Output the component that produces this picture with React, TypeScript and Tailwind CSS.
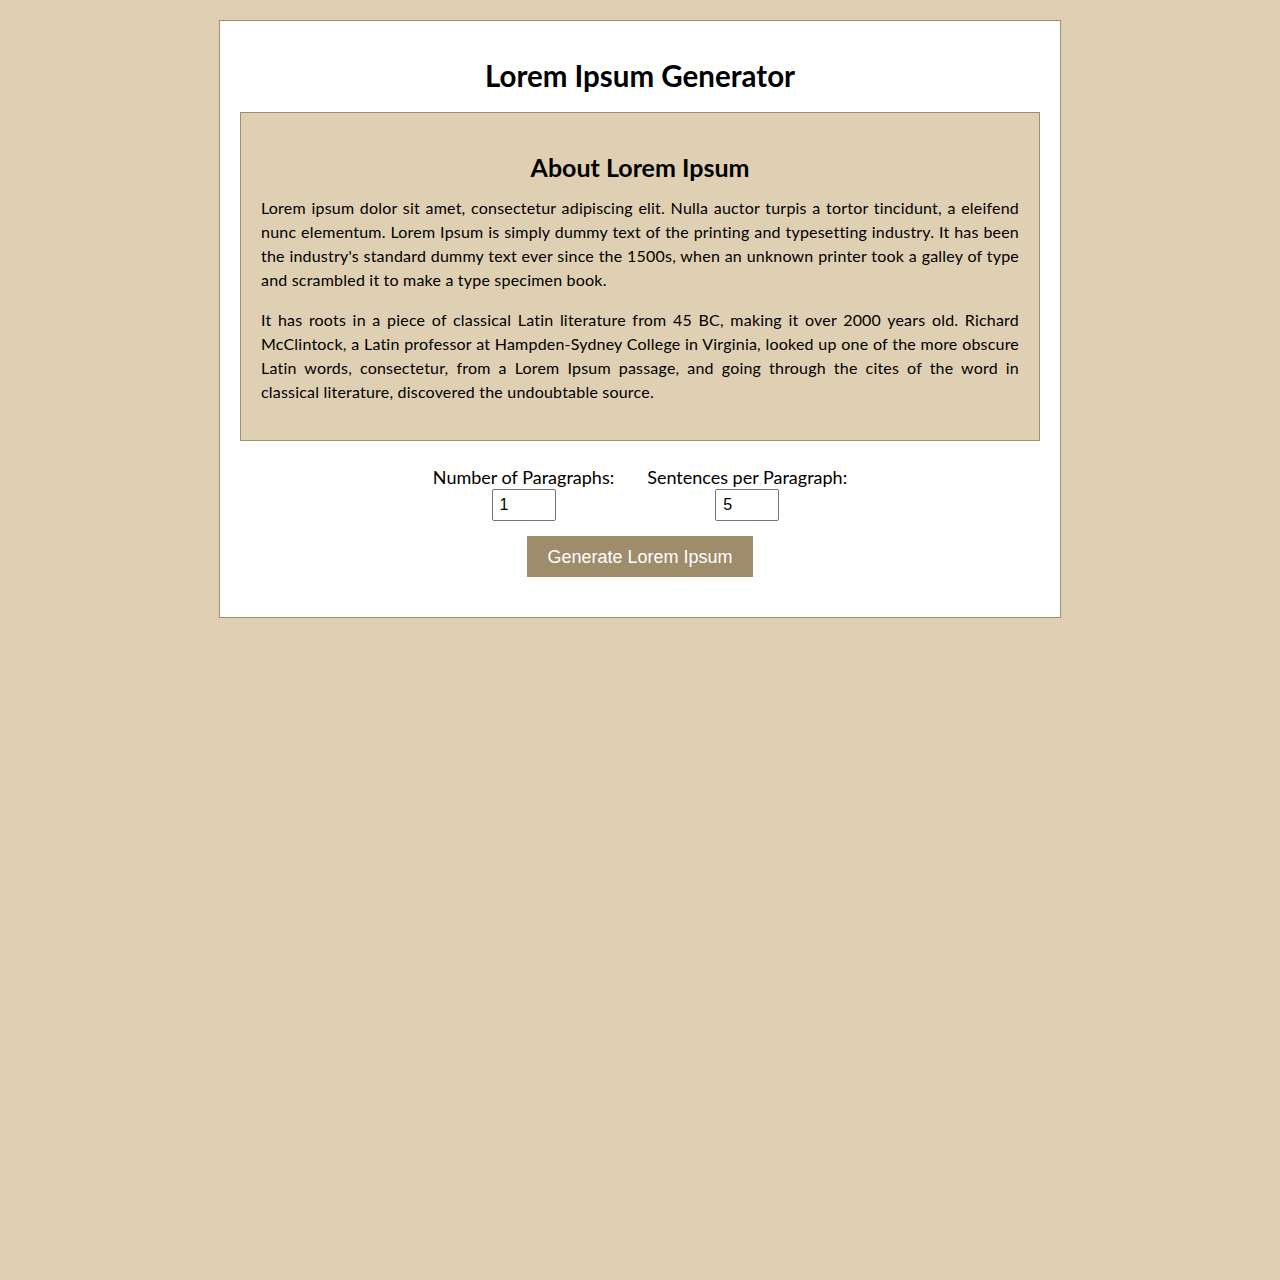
import { useState } from "react";

const para1 = [
  "Lorem ipsum dolor sit amet, consectetur adipiscing elit. Nulla auctor turpis a tortor tincidunt, a eleifend",
  "nunc elementum. Lorem Ipsum is simply dummy text of the printing and typesetting industry. It has been",
  "the industry's standard dummy text ever since the 1500s, when an unknown printer took a galley of type",
  "and scrambled it to make a type specimen book.",
];

const para2 = [
  "It has roots in a piece of classical Latin literature from 45 BC, making it over 2000 years old. Richard",
  "McClintock, a Latin professor at Hampden-Sydney College in Virginia, looked up one of the more obscure",
  "Latin words, consectetur, from a Lorem Ipsum passage, and going through the cites of the word in",
  "classical literature, discovered the undoubtable source.",
];

function Paragraph({ lines, className }: { lines: string[]; className?: string }) {
  return (
    <p className={className}>
      {lines.map((line, i) => (
        <span
          key={i}
          className={
            i < lines.length - 1
              ? "block text-justify [text-align-last:justify]"
              : "block text-left"
          }
        >
          {line}
        </span>
      ))}
    </p>
  );
}

export default function App() {
  const [paragraphs, setParagraphs] = useState("1");
  const [sentences, setSentences] = useState("5");

  return (
    <div className="min-h-[1280px] bg-[#dfd0b3] pt-5 font-['Lato','Liberation_Sans',sans-serif] text-black">
      <div className="mx-auto w-[842px] border border-[#a08f6e] bg-white p-5">
        <h1 className="mt-[19px] mb-5 text-center text-[29.5px] leading-8 font-bold">
          Lorem Ipsum Generator
        </h1>

        {/* about box */}
        <div className="border border-[#a08f6e] bg-[#dfd0b3] p-5">
          <h2 className="mt-5 mb-[15px] text-center text-[25px] leading-7 font-bold">
            About Lorem Ipsum
          </h2>
          <Paragraph lines={para1} className="text-base leading-6 tracking-[0.2px]" />
          <Paragraph lines={para2} className="my-4 text-base leading-6 tracking-[0.2px]" />
        </div>

        {/* controls */}
        <div className="mt-[25px] flex justify-center gap-[33px]">
          <div className="flex flex-col items-center">
            <label htmlFor="paragraphs" className="text-lg leading-[22px]">
              Number of Paragraphs:
            </label>
            <input
              id="paragraphs"
              type="text"
              value={paragraphs}
              onChange={(e) => setParagraphs(e.target.value)}
              className="mt-px h-8 w-16 rounded-[2px] border border-[#767676] px-[7px] font-['Liberation_Sans',sans-serif] text-base outline-none"
            />
          </div>
          <div className="flex flex-col items-center">
            <label htmlFor="sentences" className="text-lg leading-[22px]">
              Sentences per Paragraph:
            </label>
            <input
              id="sentences"
              type="text"
              value={sentences}
              onChange={(e) => setSentences(e.target.value)}
              className="mt-px h-8 w-16 rounded-[2px] border border-[#767676] px-[7px] font-['Liberation_Sans',sans-serif] text-base outline-none"
            />
          </div>
        </div>

        <div className="mt-[15px] mb-5 flex justify-center">
          <button className="h-[41px] bg-[#9f8c6b] px-5 font-['Liberation_Sans',sans-serif] text-lg text-white">
            Generate Lorem Ipsum
          </button>
        </div>
      </div>
    </div>
  );
}
